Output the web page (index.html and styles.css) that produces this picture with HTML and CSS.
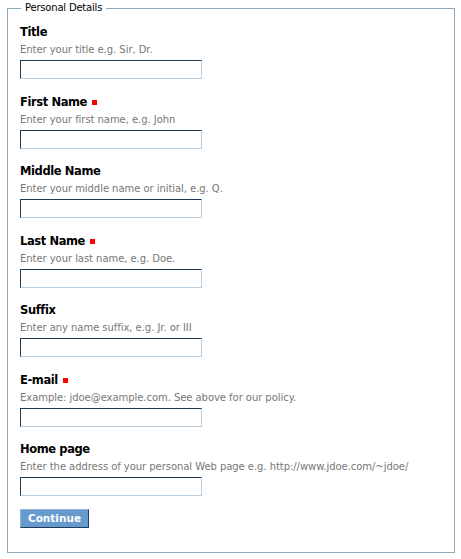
FILE: index.html
```html
<!DOCTYPE html>
<html>
<head>
<meta charset="utf-8">
<link rel="stylesheet" href="styles.css">
</head>
<body>
<form class="form">
  <fieldset class="box">
    <legend class="legend">Personal Details</legend>
    <div class="field">
      <div class="label">Title</div>
      <div class="hint">Enter your title e.g. Sir, Dr.</div>
      <input class="input" type="text">
    </div>
    <div class="field">
      <div class="label">First Name <span class="req"></span></div>
      <div class="hint">Enter your first name, e.g. John</div>
      <input class="input" type="text">
    </div>
    <div class="field">
      <div class="label">Middle Name</div>
      <div class="hint">Enter your middle name or initial, e.g. Q.</div>
      <input class="input" type="text">
    </div>
    <div class="field">
      <div class="label">Last Name <span class="req"></span></div>
      <div class="hint">Enter your last name, e.g. Doe.</div>
      <input class="input" type="text">
    </div>
    <div class="field">
      <div class="label">Suffix</div>
      <div class="hint">Enter any name suffix, e.g. Jr. or III</div>
      <input class="input" type="text">
    </div>
    <div class="field">
      <div class="label">E-mail <span class="req"></span></div>
      <div class="hint">Example: jdoe@example.com. See above for our policy.</div>
      <input class="input" type="text">
    </div>
    <div class="field">
      <div class="label">Home page</div>
      <div class="hint">Enter the address of your personal Web page e.g. http://www.jdoe.com/~jdoe/</div>
      <input class="input" type="text">
    </div>
    <div class="actions">
      <button class="button" type="button">Continue</button>
    </div>
  </fieldset>
</form>
</body>
</html>
```
FILE: styles.css
```css
html, body {
  margin: 0;
  padding: 0;
  background: #ffffff;
}
body {
  font-family: "DejaVu Sans", Verdana, sans-serif;
  color: #000000;
}
.form {
  margin: 0;
  padding: 1px 6px 0 7px;
}
.box {
  margin: 0;
  border: 1px solid #8aaebf;
  padding: 0 12px 0 12px;
  height: 552px;
  box-sizing: border-box;
  display: block;
}
.legend {
  font-size: 10px;
  line-height: 14px;
  padding: 0 4px;
  margin-left: 1px;
  letter-spacing: -0.2px;
}
.field {
  display: flex;
  flex-direction: column;
  align-items: flex-start;
  height: 69.5px;
}
.label {
  font-size: 11.5px;
  font-weight: bold;
  line-height: 15px;
  margin-top: 10px;
  display: flex;
  align-items: center;
  gap: 5px;
  letter-spacing: -0.4px;
}
.req {
  display: inline-block;
  width: 5px;
  height: 5px;
  background: #ff0000;
  margin-top: 1px;
}
.hint {
  font-size: 10px;
  line-height: 13px;
  color: #777777;
  margin-top: 3px;
  letter-spacing: -0.05px;
}
.input {
  margin: 4px 0 0 0;
  width: 182px;
  height: 19px;
  box-sizing: border-box;
  border-style: solid;
  border-width: 1px;
  border-color: #1f3a55 #b9cfe0 #b9cfe0 #1f3a55;
  background: #ffffff;
  padding: 0 2px;
}
.actions {
  display: flex;
  margin-top: 7px;
}
.button {
  width: 69px;
  height: 19px;
  box-sizing: border-box;
  margin: 0;
  padding: 0;
  background: #6699cc;
  color: #ffffff;
  font-family: "DejaVu Sans", Verdana, sans-serif;
  font-size: 10.5px;
  font-weight: bold;
  border-style: solid;
  border-width: 1px;
  border-color: #8fb5dc #1f3a5a #1f3a5a #8fb5dc;
}
```
